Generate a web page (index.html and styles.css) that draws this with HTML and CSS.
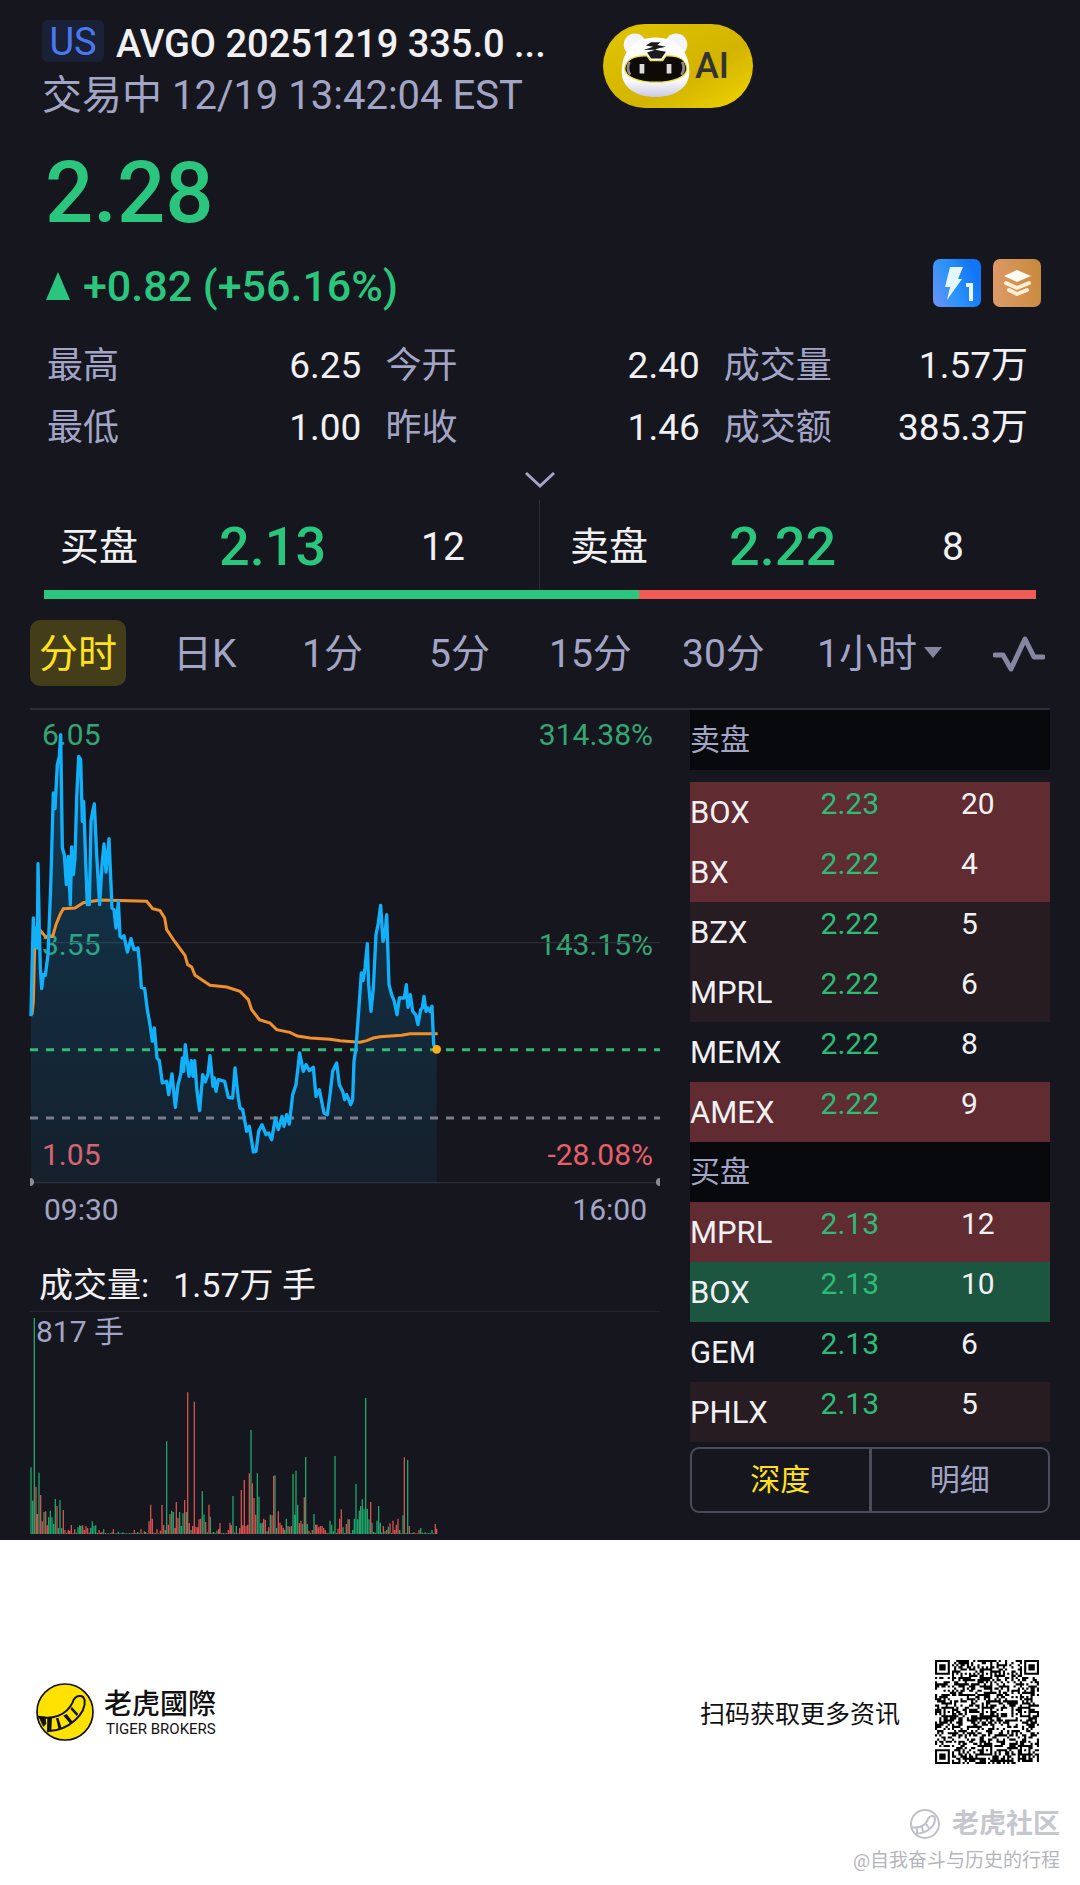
FILE: index.html
```
<!DOCTYPE html>
<html lang="zh-CN">
<head>
    <meta charset="UTF-8">
    <meta name="viewport" content="width=device-width, initial-scale=1.0">
    <title>AVGO 20251219 335.0</title>
    <link rel="stylesheet" href="styles.css">
</head>
<body>
    <main class="panel">
        <header class="top">
            <div class="title">
                <h1><span class="market">US</span>AVGO 20251219 335.0 ...</h1>
                <p class="status">交易中 12/19 13:42:04 EST</p>
            </div>
            <button class="ai">
                <svg class="tiger" viewBox="0 0 210 200" aria-hidden="true">
                    <defs>
                        <linearGradient id="face" x1="0" y1="0" x2="0" y2="1">
                            <stop offset="0.7" stop-color="#fff"/>
                            <stop offset="1" stop-color="#c9c9e2"/>
                        </linearGradient>
                    </defs>
                    <circle cx="44" cy="37" r="33" fill="#f4f4fa"/>
                    <circle cx="166" cy="37" r="33" fill="#f4f4fa"/>
                    <path d="M105 16C172 16 205 60 205 118C205 166 160 192 105 192S5 166 5 118C5 60 38 16 105 16Z" fill="url(#face)"/>
                    <path d="M14 108C16 82 42 68 80 70L90 84H126L136 70C174 68 196 82 198 108C198 132 158 148 106 148S14 132 14 108Z" fill="#0d0a08" stroke="#efe53c" stroke-width="4"/>
                    <path d="M28 88C22 100 22 114 30 126M184 88C190 100 190 114 182 126" fill="none" stroke="#8d8592" stroke-width="8"/>
                    <path d="M92 30H120L110 38L136 43L112 48L104 52L136 58L122 78H92L80 60L104 52L70 53L98 43L76 39Z" fill="#1b1b1b"/>
                    <path d="M58 94H72V122H58ZM138 94H152V122H138Z" fill="#ddd"/>
                </svg>
                AI
            </button>
        </header>

        <p class="price">2.28</p>
        <div class="change-row">
            <p class="change"><span class="up"></span>+0.82 (+56.16%)</p>
            <div class="badges">
                <svg viewBox="0 0 48 48" aria-hidden="true">
                    <defs>
                        <linearGradient id="blue" x1="0" y1="1" x2="1" y2="0.6">
                            <stop offset="0" stop-color="#6f92f2"/>
                            <stop offset="0.5" stop-color="#2b93fb"/>
                            <stop offset="1" stop-color="#1275f5"/>
                        </linearGradient>
                    </defs>
                    <rect width="48" height="48" rx="7" fill="url(#blue)"/>
                    <path d="M17 8H30L25 20H29L14 41L17 28H12Z" fill="#e4f6ff"/>
                    <path d="M33 26H38V42" fill="none" stroke="#e4f6ff" stroke-width="4"/>
                </svg>
                <svg viewBox="0 0 48 48" aria-hidden="true">
                    <defs>
                        <linearGradient id="bronze" x1="0" y1="0.6" x2="1" y2="0.4">
                            <stop offset="0" stop-color="#dd9a69"/>
                            <stop offset="1" stop-color="#c98a3c"/>
                        </linearGradient>
                    </defs>
                    <rect width="48" height="48" rx="7" fill="url(#bronze)"/>
                    <path d="M11 17L24 11L38 17L24 23Z" fill="#fffaf0"/>
                    <path d="M13 24L24 29L36 24M16 31L24 35L34 31" fill="none" stroke="#ffefd4" stroke-width="4" stroke-linecap="round" stroke-linejoin="round"/>
                </svg>
            </div>
        </div>

        <dl class="stats">
            <div><dt>最高</dt><dd>6.25</dd></div>
            <div><dt>今开</dt><dd>2.40</dd></div>
            <div><dt>成交量</dt><dd>1.57万</dd></div>
            <div><dt>最低</dt><dd>1.00</dd></div>
            <div><dt>昨收</dt><dd>1.46</dd></div>
            <div><dt>成交额</dt><dd>385.3万</dd></div>
        </dl>
        <button class="more" aria-label="展开">
            <svg viewBox="0 0 34 20"><path d="M3 3L17 16L31 3"/></svg>
        </button>

        <div class="quote">
            <div class="side"><span>买盘</span><strong>2.13</strong><span class="lots">12</span></div>
            <div class="side ask"><span>卖盘</span><strong>2.22</strong><span class="lots">8</span></div>
        </div>
        <div class="ratio"><div class="ratio-buy" style="width: 60%"></div></div>

        <nav class="tabs">
            <button class="active">分时</button>
            <button>日K</button>
            <button>1分</button>
            <button>5分</button>
            <button>15分</button>
            <button>30分</button>
            <button>1小时<span class="caret"></span></button>
            <button class="wave" aria-label="指标">
                <svg viewBox="0 0 52 36"><path d="M2 19H10L18 33L32 3L41 21H50"/></svg>
            </button>
        </nav>

        <div class="content">
            <section class="charts">
                <div class="chart">
                    <div class="scale">
                        <p class="green"><span>6.05</span><span>314.38%</span></p>
                        <p class="green"><span>3.55</span><span>143.15%</span></p>
                        <p class="red"><span>1.05</span><span>-28.08%</span></p>
                    </div>
                    <svg class="trend" viewBox="30 26 1890 1420">
                        <defs>
                            <linearGradient id="area" x1="0" y1="0" x2="0" y2="1">
                                <stop offset="0" stop-color="#00a8ff" stop-opacity="0.24"/>
                                <stop offset="1" stop-color="#00a8ff" stop-opacity="0.06"/>
                            </linearGradient>
                        </defs>
                        <path class="grid" d="M30 724H1920M30 1444H1920"/>
                        <path class="fill" id="fill"/>
                        <path class="dash last" d="M30 1045H1920"/>
                        <path class="dash prev" d="M30 1250H1920"/>
                        <polyline class="avg" points="36,940 40,900 44,740 50,735 62,688 78,708 98,705 108,670 120,640 130,622 165,620 190,604 240,596 380,600 398,622 420,628 434,650 440,685 465,722 495,762 503,790 515,797 525,822 570,852 620,857 660,870 685,895 695,925 718,955 750,965 770,985 810,993 832,1004 870,1010 930,1014 960,1018 1020,1023 1040,1018 1060,1010 1080,1006 1145,1002 1170,997 1253,997"/>
                        <polyline class="line" id="line" points="33,945 35,850 40,650 44,735 48,680 52,740 54,487 58,690 61,800 65,862 70,820 76,822 84,760 92,560 100,275 105,322 112,190 118,165 122,100 127,440 133,460 139,550 145,465 151,610 155,437 160,520 165,470 170,290 176,165 182,175 187,360 191,300 197,480 202,610 208,610 213,360 218,330 223,308 230,460 239,610 246,490 252,428 258,512 267,412 276,620 282,625 288,680 295,600 300,705 306,710 312,703 322,752 333,712 342,745 354,740 360,800 364,858 374,862 382,925 390,970 397,1020 403,980 411,1070 418,1078 427,1145 440,1140 446,1180 456,1118 466,1218 474,1150 482,1120 487,1070 491,1110 496,1030 507,1125 514,1078 519,1125 524,1078 531,1170 539,1228 548,1120 556,1142 564,1118 570,1063 579,1155 583,1130 588,1170 595,1135 614,1140 625,1188 638,1190 645,1100 655,1190 660,1220 668,1225 680,1290 688,1275 700,1352 708,1350 716,1290 726,1270 738,1300 746,1295 755,1315 766,1250 775,1285 786,1245 792,1275 800,1240 808,1268 818,1180 828,1150 839,1055 850,1110 858,1090 868,1108 880,1098 888,1185 898,1165 912,1235 922,1240 930,1180 938,1110 950,1085 958,1150 968,1170 974,1195 980,1180 992,1210 998,1195 1002,1080 1008,1040 1016,930 1024,815 1029,838 1035,800 1042,727 1046,850 1053,930 1060,860 1068,700 1075,665 1082,612 1089,720 1095,700 1100,640 1107,850 1115,880 1123,900 1131,940 1138,890 1153,890 1159,850 1164,918 1171,880 1178,930 1187,940 1194,970 1202,925 1207,920 1212,885 1218,930 1224,920 1230,930 1236,915 1241,1030 1250,1044"/>
                        <circle cx="1250" cy="1044" r="13" fill="#f9b016"/>
                        <path d="M30 1430A12 12 0 0 1 30 1454ZM1920 1430A12 12 0 0 0 1920 1454Z"/>
                    </svg>
                </div>
                <p class="times"><span>09:30</span><span>16:00</span></p>
                <h2 class="volume-title">成交量:<span>1.57万 手</span></h2>
                <div class="volume">
                    <span class="volume-max">817 手</span>
                    <svg id="volume" viewBox="30 216 1890 684"></svg>
                </div>
            </section>

            <section class="book">
                <h2 class="first">卖盘</h2>
                <table>
                    <tr class="hot"><th>BOX</th><td class="p">2.23</td><td>20</td></tr>
                    <tr class="hot"><th>BX</th><td class="p">2.22</td><td>4</td></tr>
                    <tr class="dim"><th>BZX</th><td class="p">2.22</td><td>5</td></tr>
                    <tr class="dim"><th>MPRL</th><td class="p">2.22</td><td>6</td></tr>
                    <tr><th>MEMX</th><td class="p">2.22</td><td>8</td></tr>
                    <tr class="hot"><th>AMEX</th><td class="p">2.22</td><td>9</td></tr>
                </table>
                <h2>买盘</h2>
                <table>
                    <tr class="hot"><th>MPRL</th><td class="p">2.13</td><td>12</td></tr>
                    <tr class="buy"><th>BOX</th><td class="p">2.13</td><td>10</td></tr>
                    <tr><th>GEM</th><td class="p">2.13</td><td>6</td></tr>
                    <tr class="dim"><th>PHLX</th><td class="p">2.13</td><td>5</td></tr>
                </table>
                <div class="switch">
                    <button class="on">深度</button>
                    <button>明细</button>
                </div>
            </section>
        </div>
    </main>

    <footer class="foot">
        <div class="brand">
            <svg viewBox="0 0 174 174" aria-hidden="true">
                <circle cx="87" cy="87" r="84" fill="#ffe200" stroke="#111" stroke-width="5"/>
                <path d="M6 101C50 112 92 96 110 58C116 36 142 32 146 52C150 88 104 142 34 145" fill="none" stroke="#111" stroke-width="6"/>
                <path d="M6 98L28 101L31 122L22 132ZM34 102L48 103L46 144L33 146ZM60 106L67 104L77 136L68 139ZM82 98L92 93L110 116L103 122ZM103 78L108 72L127 93L122 99Z" fill="#111"/>
            </svg>
            <p>老虎國際<small>TIGER BROKERS</small></p>
        </div>
        <div class="scan">
            <p>扫码获取更多资讯</p>
            <svg id="qr" viewBox="0 0 49 49" role="img" aria-label="二维码"></svg>
        </div>
    </footer>
    <div class="mark">
        <p class="mark-name">
            <svg viewBox="0 0 30 30" aria-hidden="true">
                <circle cx="15" cy="15" r="14"/>
                <path d="M1 18C10 20 16 16 18 10C20 6 25 6 25 10C25 17 18 24 5 25M7 19V24M12 18L13 23M16 15L19 19"/>
            </svg>
            老虎社区
        </p>
        <p>@自我奋斗与历史的行程</p>
    </div>

    <script>
        // area under the price line
        const points = document.querySelector('#line').getAttribute('points');
        document.querySelector('#fill').setAttribute('d', 'M33,1444L' + points + 'V1444Z');

        // bar heights, one per minute, negative = red
        const bars = [200,100,648,-142,-60,184,-117,-38,66,-68,-26,50,70,50,30,105,-84,18,102,18,
            -72,-12,4,-12,-10,-27,-3,-14,4,20,26,24,-26,-12,-24,-18,-4,18,38,24,
            26,3,-12,-4,-6,14,-3,2,2,-2,5,-14,2,-2,7,2,2,5,2,-2,
            2,3,-2,3,-12,-3,6,2,-14,-2,8,-6,2,-38,-88,-46,4,-3,-14,2,
            -10,-87,-27,12,278,-28,-60,70,66,-18,-96,-48,66,24,62,-102,66,-425,-33,12,
            -24,-397,-22,-20,-44,-46,129,58,-36,5,-88,52,-4,6,2,10,-14,-33,2,3,
            -2,3,-12,-34,-26,114,-4,24,2,-18,-132,-26,-162,-24,-28,-182,312,-152,-108,-58,
            182,112,32,34,-46,-42,8,-20,58,-56,-174,176,18,-68,-34,-26,-18,12,46,-24,
            22,-24,180,58,190,88,-32,-40,30,-110,231,30,-10,3,-12,60,-28,-28,-20,-24,
            -24,-18,-12,-4,2,40,28,8,234,3,-16,-46,-74,20,3,-30,44,-44,3,12,
            46,150,44,70,84,104,74,408,76,44,-96,34,6,4,40,84,34,4,-24,8,
            -12,22,-32,3,-40,-12,-28,-46,12,2,56,-230,3,222,-24,3,3,-5,2,-2,
            -12,18,4,2,5,2,3,2,12,2,-30,-16];
        let up = '';
        let down = '';
        bars.forEach((h, i) => {
            const x = Math.round(31 + i * 4.85);
            const bar = `M${x} 882v${-Math.abs(h)}h4v${Math.abs(h)}z`;
            if (h < 0) down += bar;
            else up += bar;
        });
        document.querySelector('#volume').innerHTML =
            `<path class="vol-up" d="${up}"/><path class="vol-down" d="${down}"/>`;

        // qr code, 49 x 49 modules
        let seed = 20251219;
        function random() {
            seed = (seed * 1103515245 + 12345) % 2147483648;
            return seed / 2147483648;
        }
        const cells = [];
        for (let y = 0; y < 49; y++) {
            cells.push([]);
            for (let x = 0; x < 49; x++) cells[y].push(random() > 0.5);
        }
        for (let i = 8; i < 41; i++) cells[6][i] = cells[i][6] = i % 2 == 0;
        function square(cx, cy, rings) {
            const r = rings.length - 1;
            for (let y = -r; y <= r; y++) {
                for (let x = -r; x <= r; x++) {
                    if (cells[cy + y] && cx + x >= 0 && cx + x < 49)
                        cells[cy + y][cx + x] = rings[Math.max(Math.abs(x), Math.abs(y))] == 1;
                }
            }
        }
        [[24, 6], [6, 24], [24, 24], [42, 24], [24, 42], [42, 42]].forEach(([x, y]) => square(x, y, [1, 0, 1]));
        [[3, 3], [45, 3], [3, 45]].forEach(([x, y]) => square(x, y, [1, 1, 0, 1, 0]));
        let d = '';
        cells.forEach((row, y) => row.forEach((on, x) => { if (on) d += `M${x} ${y}h1v1h-1z`; }));
        document.querySelector('#qr').innerHTML = `<path d="${d}"/>`;
    </script>
</body>
</html>
```

FILE: styles.css
```
* {
    margin: 0;
    padding: 0;
    box-sizing: border-box;
}
body {
    background: #fff;
    color: #f1f1f4;
    font-family: Roboto, "Noto Sans CJK SC", sans-serif;
}
button {
    border: 0;
    background: none;
    color: inherit;
    font: inherit;
    cursor: pointer;
}
svg {
    display: block;
}
.panel {
    background: #16171e;
    padding-top: 20px;
    overflow: hidden;
}

/* header */
.top {
    display: flex;
    padding-left: 42px;
}
.title {
    flex: 0 1 561px;
}
h1 {
    font-size: 38px;
    line-height: 48px;
    font-weight: 500;
    white-space: nowrap;
}
.market {
    display: inline-block;
    width: 62px;
    height: 42px;
    line-height: 44px;
    margin-right: 12px;
    border-radius: 6px;
    background: #1a2036;
    color: #4a78f0;
    font-weight: 400;
    text-align: center;
    vertical-align: top;
}
.status {
    margin-top: 2px;
    font-size: 40px;
    line-height: 52px;
    color: #a3a5c6;
}
.ai {
    display: flex;
    align-items: center;
    gap: 4px;
    width: 150px;
    height: 84px;
    margin-top: 4px;
    padding-left: 17px;
    border-radius: 42px;
    background: linear-gradient(150deg, #e0c400, #d3b400 60%, #f0d400);
    color: #333;
    font-size: 36px;
    font-weight: 500;
}
.tiger {
    width: 71px;
    height: 68px;
}

/* price */
.price {
    margin: 25px 0 20px 45px;
    font-size: 85px;
    line-height: 92px;
    font-weight: 500;
    color: #2bc67e;
}
.change-row {
    display: flex;
    justify-content: space-between;
    padding: 0 39px 0 46px;
}
.change {
    display: flex;
    align-items: center;
    gap: 13px;
    font-size: 43px;
    line-height: 54px;
    font-weight: 500;
    color: #2bc67e;
}
.up {
    border: 12px solid transparent;
    border-top: 0;
    border-bottom: 28px solid #2bc67e;
}
.badges {
    display: flex;
    gap: 12px;
}
.badges svg {
    width: 48px;
    height: 48px;
}

.stats {
    display: grid;
    grid-template-columns: 31fr 31fr 30fr;
    column-gap: 24px;
    margin-top: 22px;
    padding: 0 52px 0 47px;
    font-size: 36px;
    line-height: 62px;
}
.stats div {
    display: flex;
    justify-content: space-between;
}
.stats dt {
    color: #a3a5c6;
}
.stats dd {
    font-size: 37px;
}
.more {
    display: block;
    width: 100%;
    height: 41px;
}
.more svg {
    width: 34px;
    height: 20px;
    margin: 0 auto;
    fill: none;
    stroke: #a3a5c6;
    stroke-width: 3;
}

/* bid / ask */
.quote {
    display: grid;
    grid-template-columns: 1fr 1fr;
    margin: 0 44px;
}
.side {
    display: grid;
    grid-template-columns: 159px 176px 96px;
    align-items: center;
    height: 90px;
    padding: 3px 0 0 16px;
    border-right: 1px solid #2a2b33;
    font-size: 39px;
    line-height: 60px;
}
.side strong {
    font-size: 54px;
    font-weight: 500;
    color: #2bc67e;
}
.side.ask {
    padding-left: 30px;
    border: 0;
}
.lots {
    text-align: center;
}
.ratio {
    height: 9px;
    margin: 0 44px;
    background: #f15b56;
}
.ratio-buy {
    height: 9px;
    background: #2bc67e;
}

.tabs {
    display: grid;
    grid-template-columns: 143fr 129fr 127fr 120fr 133fr 135fr 176fr 54fr;
    justify-items: start;
    margin: 21px 33px 22px 30px;
    font-size: 39px;
    line-height: 64px;
    color: #a3a5c6;
    white-space: nowrap;
}
.tabs button {
    padding-top: 2px;
}
.tabs .active {
    padding: 2px 9px 0;
    border-radius: 10px;
    background: #433d19;
    color: #ffe11f;
}
.caret {
    display: inline-block;
    margin-left: 7px;
    border: 9px solid transparent;
    border-bottom: 0;
    border-top: 11px solid #85869f;
    vertical-align: 9px;
}
.wave svg {
    width: 52px;
    height: 36px;
    fill: none;
    stroke: #85869f;
    stroke-width: 5;
    stroke-linecap: round;
    stroke-linejoin: round;
}

/* charts and order book */
.content {
    display: grid;
    grid-template-columns: 630fr 360fr;
    column-gap: 30px;
    margin: 0 30px;
    border-top: 2px solid #2e2f35;
}
.chart {
    position: relative;
}
.scale {
    position: absolute;
    inset: 7px 7px 10px 12px;
    display: flex;
    flex-direction: column;
    justify-content: space-between;
    font-size: 30px;
    line-height: 36px;
}
.scale p, .times {
    display: flex;
    justify-content: space-between;
}
.green {
    color: #35a673;
}
.red {
    color: #e5606a;
}
.trend {
    position: relative;
    width: 100%;
    overflow: visible;
}
.trend path, .trend polyline {
    fill: none;
}
.trend .fill {
    fill: url(#area);
}
.grid {
    stroke: #34353c;
    stroke-width: 3;
}
.dash {
    stroke-width: 9;
    stroke-dasharray: 24;
}
.last {
    stroke: #36b87a;
}
.prev {
    stroke: #7c7d8c;
}
.avg {
    stroke: #f0902c;
    stroke-width: 9;
}
.line {
    stroke: #10b0fb;
    stroke-width: 10;
    stroke-linejoin: round;
}
.trend path:last-child {
    fill: #8b8c96;
}
.times {
    padding: 7px 13px 0 14px;
    font-size: 30px;
    line-height: 40px;
    color: #a3a5c6;
}
.volume-title {
    margin-top: 29px;
    padding-left: 9px;
    font-size: 34px;
    line-height: 52px;
    font-weight: 400;
}
.volume-title span {
    margin-left: 24px;
}
.volume {
    position: relative;
    border-top: 1px solid #24252c;
}
.volume svg {
    width: 100%;
}
.volume-max {
    position: absolute;
    left: 6px;
    font-size: 30px;
    line-height: 40px;
    color: #a3a5c6;
}
.vol-up {
    fill: #1fa368;
}
.vol-down {
    fill: #d2504f;
}

.book h2 {
    background: #08090c;
    color: #a3a5c6;
    font-size: 30px;
    line-height: 60px;
    font-weight: 400;
}
.book .first {
    margin-bottom: 12px;
}
.book table {
    width: 100%;
    border-collapse: collapse;
    table-layout: fixed;
    font-size: 30px;
    line-height: 40px;
}
.book tr {
    height: 60px;
}
.book th {
    width: 36%;
    padding-top: 2px;
    font-size: 31px;
    font-weight: 400;
    text-align: left;
}
.book td {
    padding: 2px 0 0 1px;
    vertical-align: top;
}
.book .p {
    width: 39%;
    color: #2dbb78;
}
.hot {
    background: #602c31;
}
.dim {
    background: #261c22;
}
.buy {
    background: #1c5540;
}
.switch {
    display: flex;
    margin-top: 5px;
    border: 2px solid #4b4b5b;
    border-radius: 9px;
    font-size: 30px;
    line-height: 62px;
    color: #a3a5c6;
}
.switch button {
    flex: 1;
}
.switch .on {
    border-right: 3px solid #4b4b5b;
    color: #ffe11f;
}

/* footer */
.foot {
    display: flex;
    justify-content: space-between;
    align-items: center;
    padding: 120px 41px 0 36px;
    color: #111;
}
.brand, .scan {
    display: flex;
    align-items: center;
}
.brand svg {
    width: 58px;
    height: 58px;
}
.brand p {
    margin-left: 10px;
    padding-top: 2px;
    font-size: 28px;
    line-height: 32px;
    font-weight: 500;
}
.brand small {
    display: block;
    padding-left: 2px;
    font-size: 15px;
    line-height: 16px;
    font-weight: 400;
}
.scan {
    gap: 35px;
    font-size: 25px;
}
.scan svg {
    width: 104px;
    height: 104px;
}
.mark {
    padding: 40px 20px 8px 0;
    font-size: 19px;
    line-height: 34px;
    color: #b5b5bd;
    text-align: right;
}
.mark-name {
    display: flex;
    justify-content: flex-end;
    align-items: center;
    gap: 12px;
    font-size: 27px;
    line-height: 40px;
    font-weight: 700;
    color: #c6c6ce;
}
.mark svg {
    width: 30px;
    height: 30px;
    fill: none;
    stroke: #c0c0ca;
    stroke-width: 2;
}
```
